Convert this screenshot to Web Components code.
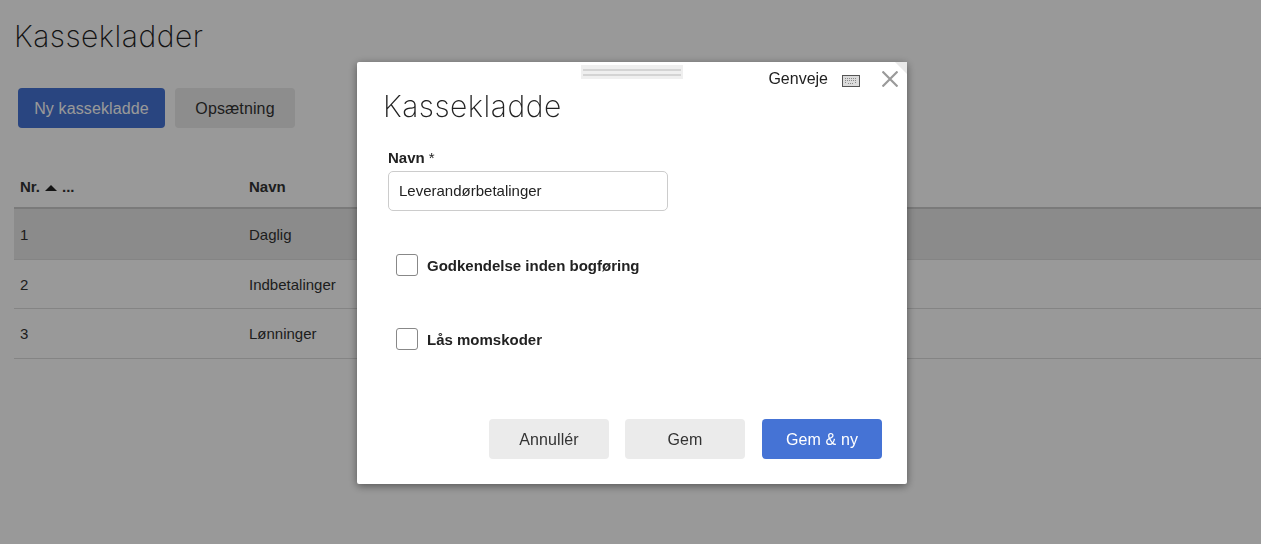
<!DOCTYPE html>
<html lang="da">
<head>
<meta charset="utf-8">
<title>Kassekladder</title>
<style>
  html, body { margin: 0; height: 100%; background: #fff; overflow: hidden; }
  body { font-family: "Liberation Sans", Arial, sans-serif; color: #333; }
</style>
</head>
<body>
<journal-page>
  <journal-table></journal-table>
</journal-page>
<modal-backdrop>
  <journal-dialog></journal-dialog>
</modal-backdrop>

<script>
class UiButton extends HTMLElement {
	constructor() {
		super();
		this.attachShadow({ mode: "open" }).innerHTML = `
    <style>
      :host {
        display: inline-flex;
        align-items: center;
        justify-content: center;
        box-sizing: border-box;
        width: 120px;
        height: 40px;
        padding-top: 1px;
        border-radius: 4px;
        background: #ebebeb;
        color: #333;
        font: 16px "Liberation Sans", Arial, sans-serif;
        letter-spacing: 0.12px;
      }
      :host([primary]) {
        background: #4573d5;
        color: #fff;
      }
    </style>
    <slot></slot>
		`;
	}
}
customElements.define("ui-button", UiButton);

class JournalPage extends HTMLElement {
	constructor() {
		super();
		this.attachShadow({ mode: "open" }).innerHTML = `
    <style>
      :host {
        display: block;
        padding: 0 0 0 14px;
      }
      h1 {
        margin: 0;
        padding-top: 16px;
        height: 40px;
        font: 200 30px/40px Inter, sans-serif;
        letter-spacing: 0.5px;
        color: #222;
      }
      .actions {
        display: flex;
        gap: 10px;
        margin: 32px 0 0 4px;
      }
      .new { width: 147px; }
      .setup { width: 120px; }
    </style>
    <h1>Kassekladder</h1>
    <div class="actions">
      <ui-button primary class="new">Ny kassekladde</ui-button>
      <ui-button class="setup">Opsætning</ui-button>
    </div>
    <slot></slot>
		`;
	}
}
customElements.define("journal-page", JournalPage);

class JournalTable extends HTMLElement {
	constructor() {
		super();
		this.attachShadow({ mode: "open" }).innerHTML = `
    <style>
      :host {
        display: block;
        margin-top: 38px;
        font: 15px "Liberation Sans", Arial, sans-serif;
        color: #333;
      }
      .row {
        display: grid;
        grid-template-columns: 229px 1fr;
        align-items: center;
        padding-left: 6px;
        height: 49px;
        box-sizing: border-box;
        border-bottom: 1px solid #ddd;
      }
      .head {
        height: 43px;
        font-weight: bold;
        border-bottom: 2px solid #ccc;
      }
      .nr { display: flex; align-items: center; gap: 5px; }
      .sort { width: 0; height: 0; margin-top: 2px; border: 6px solid transparent; border-top: 0; border-bottom: 6px solid #222; }
      .sel { background: #e8e8e8; height: 51px; }
      .last { height: 50px; }
    </style>
    <div class="row head"><span class="nr">Nr. <i class="sort"></i> ...</span><span>Navn</span></div>
    <div class="row sel"><span>1</span><span>Daglig</span></div>
    <div class="row"><span>2</span><span>Indbetalinger</span></div>
    <div class="row last"><span>3</span><span>Lønninger</span></div>
		`;
	}
}
customElements.define("journal-table", JournalTable);

class ModalBackdrop extends HTMLElement {
	constructor() {
		super();
		this.attachShadow({ mode: "open" }).innerHTML = `
    <style>
      :host {
        display: block;
        position: fixed;
        inset: 0;
        background: rgba(0, 0, 0, 0.4);
      }
    </style>
    <slot></slot>
		`;
	}
}
customElements.define("modal-backdrop", ModalBackdrop);

class CheckField extends HTMLElement {
	constructor() {
		super();
		this.attachShadow({ mode: "open" }).innerHTML = `
    <style>
      :host {
        display: flex;
        align-items: center;
        gap: 8px;
        font: bold 15px "Liberation Sans", Arial, sans-serif;
        color: #222;
      }
      .box {
        width: 20px;
        height: 20px;
        border: 1.5px solid #888;
        border-radius: 3px;
        background: #fff;
        margin-right: 1px;
      }
    </style>
    <span class="box"></span><slot></slot>
		`;
	}
}
customElements.define("check-field", CheckField);

class JournalDialog extends HTMLElement {
	constructor() {
		super();
		this.attachShadow({ mode: "open" }).innerHTML = `
    <style>
      :host {
        display: flex;
        flex-direction: column;
        position: absolute;
        left: 357px;
        top: 62px;
        width: 550px;
        height: 422px;
        background: #fff;
        border-radius: 2px;
        box-shadow: 0 2px 8px rgba(0, 0, 0, 0.45);
        box-sizing: border-box;
        padding: 0 25px 25px 26px;
        font-family: "Liberation Sans", Arial, sans-serif;
      }
      .grip {
        position: absolute;
        left: 224px;
        top: 3px;
        width: 102px;
        height: 14px;
        box-sizing: border-box;
        background: #efefef;
        padding-top: 4px;
      }
      .grip i {
        display: block;
        margin: 0 2px 3px;
        height: 2px;
        background: #d4d4d4;
      }
      .tools {
        position: absolute;
        top: 9px;
        right: 9px;
        display: flex;
        align-items: center;
        height: 16px;
        font-size: 16px;
        color: #222;
      }
      .tools span { margin-right: 14px; }
      .tools .kbd { margin: 4px 22px 0 0; }
      .corner {
        position: absolute;
        right: 0;
        top: 0;
        width: 0;
        height: 0;
        border-top: 12px solid #e8e8e8;
        border-left: 12px solid transparent;
      }
      h2 {
        margin: 24px 0 0;
        font: 200 30px/40px Inter, sans-serif;
        letter-spacing: 0.5px;
        color: #222;
      }
      label {
        display: block;
        margin: 24px 0 0 5px;
        height: 16px;
        font: bold 15px/16px "Liberation Sans", Arial, sans-serif;
        color: #222;
      }
      label em { font-style: normal; font-weight: normal; }
      .input {
        margin: 5px 0 0 5px;
        width: 280px;
        height: 40px;
        box-sizing: border-box;
        border: 1px solid #ccc;
        border-radius: 5px;
        padding: 0 10px 2px;
        display: flex;
        align-items: center;
        font-size: 15px;
        color: #222;
      }
      .checks {
        margin: 43px 0 0 13px;
        display: flex;
        flex-direction: column;
        gap: 52px;
      }
      .buttons {
        margin-top: auto;
        display: flex;
        justify-content: flex-end;
        gap: 16px;
      }
      .buttons ui-button:last-child { margin-left: 1px; }
    </style>
    <div class="corner"></div>
    <div class="grip"><i></i><i></i></div>
    <div class="tools">
      <span>Genveje</span>
      <svg class="kbd" width="18" height="12" viewBox="0 0 18 12">
        <rect x="0.5" y="0.5" width="17" height="11" fill="#dcdcdc" stroke="#555"/>
        <path d="M3 3.5h12M3 5.5h12M3 7.5h2M13 7.5h2M6 8.5h6" stroke="#8a8a8a" stroke-width="1" stroke-dasharray="1 1" fill="none"/>
      </svg>
      <svg width="16" height="16" viewBox="0 0 16 16">
        <path d="M0.5 0.5L15.5 15.5M15.5 0.5L0.5 15.5" stroke="#9a9a9a" stroke-width="2.2" fill="none"/>
      </svg>
    </div>
    <h2>Kassekladde</h2>
    <label>Navn <em>*</em></label>
    <div class="input">Leverandørbetalinger</div>
    <div class="checks">
      <check-field>Godkendelse inden bogføring</check-field>
      <check-field>Lås momskoder</check-field>
    </div>
    <div class="buttons">
      <ui-button>Annullér</ui-button>
      <ui-button>Gem</ui-button>
      <ui-button primary>Gem &amp; ny</ui-button>
    </div>
		`;
	}
}
customElements.define("journal-dialog", JournalDialog);
</script>
</body>
</html>
